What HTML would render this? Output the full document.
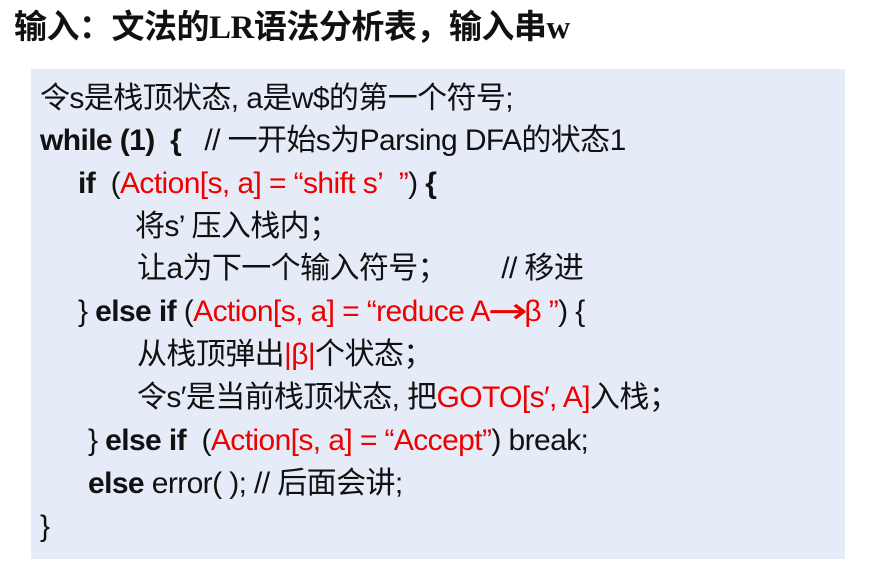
<!DOCTYPE html>
<html><head><meta charset="utf-8"><style>
body{margin:0;width:875px;height:583px;background:#fff;overflow:hidden;position:relative;font-family:"Liberation Sans Narrow","Liberation Sans","Noto Sans CJK SC",sans-serif;}
.t{position:absolute;left:14px;top:0px;font-size:33px;font-weight:bold;font-family:"Liberation Sans","Noto Sans CJK SC",sans-serif;color:#111;white-space:nowrap;letter-spacing:-0.5px}
.t .s{font-family:"Liberation Serif",serif}
.box{position:absolute;left:31px;top:69px;width:814px;height:490px;background:#e5ecf7}
.l{position:absolute;font-size:30px;line-height:30px;color:#111;white-space:nowrap;letter-spacing:-0.6px}
.r{color:#e00}
b{font-weight:bold}
.ar{display:inline-block;font-family:"DejaVu Sans",sans-serif;transform:scale(1.6,1.2);margin:0 5px}
</style></head><body>
<div class="t">输入：文法的<span class="s">LR</span>语法分析表，输入串<span class="s">w</span></div>
<div class="box"></div>
<div class="l" style="left:40px;top:84px">令s是栈顶状态, a是w$的第一个符号;</div>
<div class="l" style="left:40px;top:126px"><b>while (1)&nbsp; {</b>&nbsp;&nbsp; // 一开始s为Parsing DFA的状态1</div>
<div class="l" style="left:78px;top:169px"><b>if</b>&nbsp; (<span class="r">Action[s, a] = “shift s’&nbsp; ”</span>) <b>{</b></div>
<div class="l" style="left:135px;top:212px">将s’ 压入栈内；</div>
<div class="l" style="left:137px;top:254px">让a为下一个输入符号；&nbsp;&nbsp;&nbsp;&nbsp;&nbsp;&nbsp; // 移进</div>
<div class="l" style="left:78px;top:297px">} <b>else if</b> (<span class="r">Action[s, a] = “reduce A<span class="ar">→</span>β ”</span>) {</div>
<div class="l" style="left:137px;top:340px">从栈顶弹出<span class="r">|β|</span>个状态；</div>
<div class="l" style="left:137px;top:383px">令s′是当前栈顶状态, 把<span class="r">GOTO[s′, A]</span>入栈；</div>
<div class="l" style="left:88px;top:426px">} <b>else if</b>&nbsp; (<span class="r">Action[s, a] = “Accept”</span>) break;</div>
<div class="l" style="left:88px;top:469px"><b>else</b> error( ); // 后面会讲;</div>
<div class="l" style="left:40px;top:512px">}</div>
</body></html>
